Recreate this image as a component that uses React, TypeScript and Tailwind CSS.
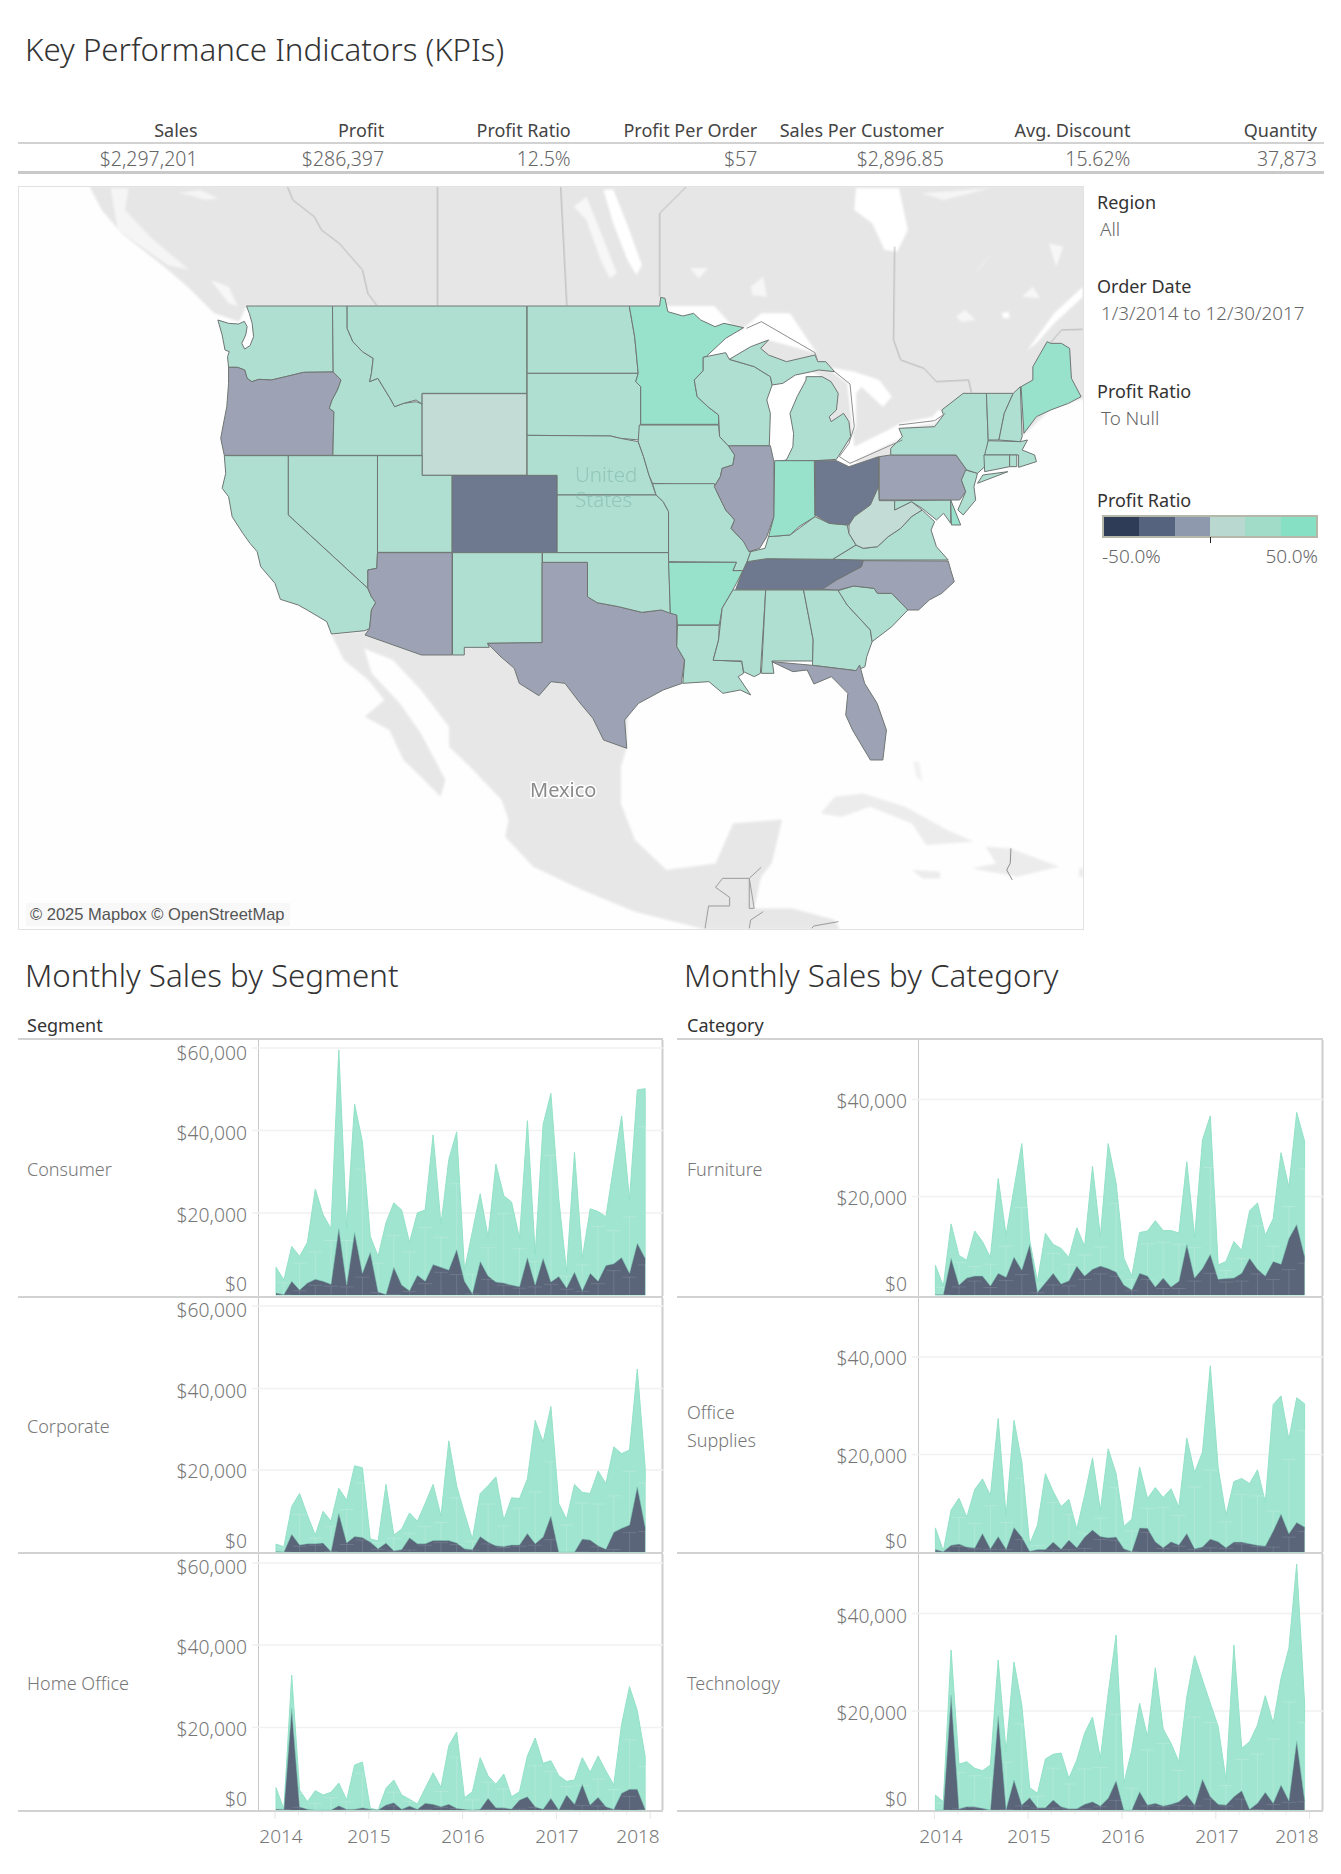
import React from 'react';

const AQUA = '#aedfd1';
const BRIGHT = '#98e1cb';
const PALE = '#c3dcd5';
const GREY = '#9da3b4';
const DARK = '#6e7990';
const EDGE = '#6f7572';

const westStates: [string, string][] = [
  [AQUA, '690,378 931,378 933,576 850,577 800,590 760,600 725,598 705,605 692,595 685,570 665,562 640,562 637,530 642,515 630,510 622,465 610,420 640,430 668,432 684,424 692,440 688,465 677,490 685,507 700,497 710,470 706,430 698,400'],
  [GREY, '640,562 665,562 685,570 692,595 705,605 725,598 760,600 800,590 850,577 933,576 938,582 955,600 945,630 930,660 922,685 935,695 932,826 628,826 618,775 625,735 635,680 640,610'],
  [AQUA, '931,378 972,378 972,445 988,485 1015,515 1045,535 1040,580 1035,605 1058,595 1078,630 1095,660 1105,680 1130,670 1165,665 1182,672 1182,826 932,826 935,695 922,685 930,660 945,630 955,600 933,576'],
  [AQUA, '972,378 1475,378 1475,640 1182,640 1182,672 1165,660 1130,670 1105,680 1095,660 1078,630 1058,595 1035,605 1040,580 1045,535 1015,515 988,485 972,445'],
  [PALE, '1182,641 1475,641 1475,886 1182,886'],
  [AQUA, '807,827 1057,827 1057,1118 1055,1165 1030,1170 1030,1225 807,1005'],
  [AQUA, '1057,827 1182,827 1182,886 1266,886 1266,1117 1057,1117'],
  [DARK, '1266,886 1560,886 1560,1117 1266,1117'],
  [AQUA, '628,827 807,827 807,1005 1030,1225 1040,1250 1052,1268 1040,1290 1035,1345 1022,1352 928,1362 915,1325 860,1290 835,1275 785,1258 770,1210 730,1160 720,1115 700,1090 680,1060 650,1010 640,950 622,925 632,880'],
  [GREY, '1057,1118 1266,1118 1266,1425 1180,1425 1022,1365 1035,1345 1040,1290 1052,1268 1040,1250 1030,1225 1030,1170 1055,1165'],
  [AQUA, '1267,1118 1518,1118 1518,1388 1365,1390 1370,1402 1300,1402 1300,1425 1267,1425'],
  [GREY, '1518,1147 1645,1147 1645,1250 1672,1268 1732,1280 1797,1297 1852,1290 1895,1305 1895,1400 1917,1440 1909,1500 1910,1510 1857,1530 1788,1570 1749,1620 1755,1705 1690,1680 1660,1615 1621,1565 1582,1510 1543,1505 1509,1547 1454,1510 1440,1465 1400,1428 1365,1390 1518,1388'],
];

const eastStates: [string, string][] = [
  [AQUA, '-36,378 250,378 265,470 275,580 -36,580'],
  [AQUA, '-36,580 275,580 268,605 282,620 282,735 277,780 225,775 198,768 -36,766'],
  [AQUA, '-36,766 197,768 225,775 275,785 290,830 305,885 325,945 48,945 48,886 -36,886'],
  [AQUA, '48,945 325,945 345,965 360,995 360,1118 48,1118'],
  [AQUA, '7,1118 360,1118 365,1300 340,1290 285,1297 220,1280 160,1268 133,1250 133,1147 7,1147'],
  [BRIGHT, '250,378 335,378 338,352 350,355 358,395 400,408 430,400 450,420 490,440 515,430 570,443 520,475 465,530 457,532 457,572 432,600 440,650 470,680 500,705 500,733 282,733 282,620 268,605 275,580 265,470'],
  [AQUA, '278,735 500,735 503,770 530,800 545,825 540,855 510,865 505,890 488,920 315,910 305,885 290,830 275,785'],
  [AQUA, '315,911 488,911 495,935 520,990 545,1020 535,1045 570,1085 590,1115 580,1145 570,1172 540,1172 550,1147 360,1145 360,995 345,965 325,945'],
  [BRIGHT, '360,1147 550,1147 540,1172 568,1172 550,1210 540,1230 510,1285 502,1335 385,1335 383,1305 365,1300'],
  [AQUA, '385,1336 502,1336 500,1380 485,1440 565,1445 570,1480 555,1490 590,1545 561,1530 512,1540 473,1505 400,1510 405,1440 383,1400'],
  [AQUA, '540,1230 632,1230 617,1480 600,1490 570,1475 565,1443 485,1441 500,1380 510,1285'],
  [AQUA, '632,1230 738,1230 765,1380 763,1443 650,1443 655,1480 620,1480'],
  [AQUA, '738,1230 835,1230 860,1275 925,1350 930,1385 915,1430 910,1460 885,1472 763,1456 765,1380'],
  [GREY, '649,1445 763,1456 885,1472 895,1455 909,1510 944,1570 970,1650 960,1740 925,1740 875,1650 856,1605 862,1540 816,1490 767,1512 748,1470 708,1475'],
  [AQUA, '835,1232 878,1218 935,1225 945,1240 985,1240 1030,1290 985,1340 930,1385 925,1350 860,1275'],
  [GREY, '905,1142 1143,1143 1150,1170 1160,1205 1125,1240 1090,1260 1060,1290 1030,1290 985,1240 945,1240 935,1225 878,1218 835,1230 790,1228 830,1200 900,1160'],
  [DARK, '635,1136 905,1140 900,1160 830,1200 790,1228 548,1228 568,1172 580,1145'],
  [AQUA, '640,1070 700,1065 770,1010 810,1030 860,1035 865,1060 885,1095 820,1138 635,1136 580,1145 590,1115 630,1105'],
  [GREY, '527,797 645,797 655,845 655,1010 635,1070 615,1105 585,1115 570,1085 535,1045 545,1020 520,990 495,935 488,920 505,890 510,865 540,855 545,825'],
  [AQUA, '457,532 465,530 520,518 530,538 600,560 645,590 650,615 635,660 645,700 642,797 527,797 503,770 500,705 470,680 440,650 432,600 457,572'],
  [AQUA, '530,538 590,500 640,480 618,505 640,525 690,545 770,525 778,545 800,545 825,575 780,570 760,575 715,585 680,610 650,615 645,590 600,560'],
  [AQUA, '745,590 790,590 815,605 835,640 830,690 810,710 815,725 850,700 865,725 870,770 830,838 770,842 660,845 690,840 708,800 710,760 700,700 720,650 745,600'],
  [BRIGHT, '657,842 768,842 770,1010 725,1040 700,1065 640,1070 655,1010'],
  [DARK, '770,842 830,842 865,860 948,830 948,920 925,975 880,1010 865,1035 810,1030 770,1005'],
  [AQUA, '885,1095 905,1105 945,1100 975,1070 1010,1045 1040,1010 1070,990 1105,1025 1095,1050 1110,1100 1143,1140 905,1140 820,1138'],
  [PALE, '950,962 993,962 993,990 1040,965 1070,990 1040,1010 1010,1045 975,1070 945,1100 905,1105 885,1095 865,1060 865,1035 880,1010 925,975 948,920'],
  [AQUA, '993,962 1150,960 1150,1030 1130,1000 1110,1020 1070,985 1040,965 993,990'],
  [BRIGHT, '1150,960 1178,1035 1152,1035'],
  [GREY, '950,830 982,825 1165,825 1195,870 1180,900 1192,935 1175,960 950,960'],
  [AQUA, '1192,870 1225,880 1215,920 1220,960 1185,1005 1170,990 1192,935 1180,900'],
  [AQUA, '982,825 982,805 1015,770 1005,745 1105,740 1130,705 1125,690 1185,640 1250,640 1255,780 1245,860 1225,880 1195,870 1165,825'],
  [AQUA, '1225,910 1310,875 1240,885'],
  [AQUA, '1250,640 1325,640 1300,700 1285,780 1255,780'],
  [AQUA, '1325,640 1345,620 1350,770 1345,785 1285,780 1300,700'],
  [BRIGHT, '1347,620 1380,600 1380,560 1420,485 1430,490 1460,490 1483,505 1488,595 1515,650 1480,670 1430,690 1390,710 1355,760'],
  [AQUA, '1255,782 1345,785 1365,780 1350,810 1385,825 1390,845 1340,862 1340,825 1245,825'],
  [AQUA, '1243,825 1315,825 1315,860 1245,875'],
  [AQUA, '1315,825 1335,825 1335,860 1315,860'],
];

const Map = () => (
  <svg width="1064" height="742" viewBox="19 187 1064 742" className="block">
    <defs>
      <filter id="soft" x="-5%" y="-5%" width="110%" height="110%">
        <feGaussianBlur stdDeviation="1.1" />
      </filter>
    </defs>
    <rect x="0" y="0" width="1341" height="1874" fill="#fefefe" />
    <g filter="url(#soft)">
      <g transform="translate(0 180) scale(0.35714 0.33333)">
        <polygon fill="#e6e6e6" points="250,18 285,90 340,160 460,260 530,325 600,400 670,425 690,378 2000,378 2400,850 2700,800 2860,770 2950,680 3040,655 3040,18" />
        <polygon fill="#f5f5f5" points="310,25 360,25 350,90 420,170 480,225 530,270 470,255 330,150" />
        <polygon fill="#f7f7f7" points="590,300 640,320 665,378 640,370" />
        <polygon fill="#f5f5f5" points="500,40 560,30 610,55 575,60 530,45" />
      </g>
      <g transform="translate(540 180) scale(0.35714 0.33333)" fill="#ffffff">
        <polygon points="178,30 205,28 250,150 285,255 270,285 245,240 205,130" />
        <polygon fill="#f7f7f7" points="95,80 130,50 160,130 215,280 195,295 170,240 130,120" />
        <polygon points="885,25 1005,25 1030,150 1000,215 965,210 930,130 880,90" />
        <polygon fill="#f5f5f5" points="1070,40 1260,25 1130,60" />
        <polygon fill="#f6f6f6" points="590,320 625,290 635,350 595,345" />
        <polygon fill="#f6f6f6" points="1165,410 1190,390 1220,420 1180,425" />
        <polygon points="1292,400 1312,395 1315,415 1298,415" />
        <polygon points="1365,510 1440,400 1520,320 1520,350 1440,430 1390,490" />
        <polygon fill="#f5f5f5" points="1215,285 1270,215 1235,255" />
        <polygon fill="#f7f7f7" points="420,265 470,265 445,295" />
        <polygon fill="#f7f7f7" points="1350,350 1380,320 1400,355" />
        <polygon fill="#f7f7f7" points="1425,190 1465,200 1445,260" />
        <polygon points="465,530 570,445 620,400 700,400 775,520 640,480 530,530" />
        <polygon points="800,560 880,575 950,600 985,650 960,680 900,620 885,640 885,740 860,790 840,830 870,850 1010,775 1010,745 1105,730 1135,700 1115,690 1100,710 1010,730 975,750 880,800 870,700 860,610" />
        <polygon points="640,665 680,610 715,585 760,575 790,590 745,600 720,650 700,700 710,760 708,800 690,840 660,845 642,790" />
      </g>
      <g transform="translate(0 660) scale(0.70153 0.33333)">
        <polygon fill="#e7e7e7" points="472,-78 524,-88 519,-35 530,40 570,130 600,220 635,360 628,410 600,350 575,300 555,210 520,170 548,120 525,60 490,0" />
        <polygon fill="#e7e7e7" points="524,-88 900,-88 893,265 885,320 885,430 905,540 950,630 1020,610 1045,490 1115,478 1100,610 1085,650 1075,745 1130,745 1190,780 1197,808 1005,808 905,755 830,690 760,620 720,530 725,480 715,420 670,320 640,260 640,200 600,90 560,0 519,-35" />
        <polygon fill="#ececec" points="1170,460 1190,410 1230,400 1290,440 1350,510 1388,545 1320,555 1300,490 1240,440 1200,470" />
        <polygon fill="#ececec" points="1405,560 1440,565 1510,620 1450,650 1385,625 1420,610" />
        <polygon fill="#ececec" points="1300,630 1340,635 1340,655 1315,655" />
        <polygon fill="#f1f1f1" points="1302,305 1310,305 1315,365 1306,350" />
        <polygon fill="#ececec" points="1538,625 1545,625 1545,650 1538,650" />
      </g>
    </g>
    <g transform="translate(0 660) scale(0.70153 0.33333)" fill="none" stroke="#9a9a9a" strokeWidth="1">
      <polyline vectorEffect="non-scaling-stroke" points="1005,805 1010,738 1040,738 1040,712 1020,682 1030,655 1068,655 1068,745 1075,745 1068,655 1085,622" />
      <polyline vectorEffect="non-scaling-stroke" points="1068,805 1070,780 1088,755" />
      <polyline vectorEffect="non-scaling-stroke" points="1157,805 1160,798 1195,785" />
      <polyline vectorEffect="non-scaling-stroke" stroke="#8a8a8a" points="1441,565 1440,610 1435,630 1443,660" />
    </g>
    <g fill="none" stroke="#b2b2b2" strokeWidth="1" transform="translate(0 180) scale(0.35714 0.33333)">
      <polyline vectorEffect="non-scaling-stroke" points="805,20 820,60 880,110 900,150 950,190 1015,270 1030,340 1055,376" />
      <polyline vectorEffect="non-scaling-stroke" points="1225,20 1225,376" />
      <polyline vectorEffect="non-scaling-stroke" points="1570,20 1587,376" />
      <polyline vectorEffect="non-scaling-stroke" points="1922,20 1847,100 1847,350" />
      <polyline vectorEffect="non-scaling-stroke" points="2505,200 2502,480 2522,540 2587,565 2622,605 2712,600 2720,638" />
      <polyline vectorEffect="non-scaling-stroke" points="3032,448 2972,450 2940,490" />
    </g>
    <g transform="translate(0 180) scale(0.35714 0.33333)" stroke={EDGE} strokeWidth="1" strokeLinejoin="round">
      {westStates.map((s, i) => (
        <polygon key={i} fill={s[0]} points={s[1]} vectorEffect="non-scaling-stroke" />
      ))}
    </g>
    <g transform="translate(540 180) scale(0.35714 0.33333)" stroke={EDGE} strokeWidth="1" strokeLinejoin="round">
      {eastStates.map((s, i) => (
        <polygon key={i} fill={s[0]} points={s[1]} vectorEffect="non-scaling-stroke" />
      ))}
      <polyline fill="none" stroke="#8b8f8d" vectorEffect="non-scaling-stroke" points="578,445 620,425 770,518 778,545" />
      <polyline fill="none" stroke="#8b8f8d" vectorEffect="non-scaling-stroke" points="825,575 868,612 880,740 865,790 838,830 868,850 1015,780" />
      <polyline fill="none" stroke="#8b8f8d" vectorEffect="non-scaling-stroke" points="1005,735 1105,722 1135,700" />
    </g>
    <text x="575" y="482" fontSize="20.5" fontWeight="300" fill="#7fb5a6" fillOpacity="0.6" fontFamily="'Noto Sans', sans-serif">United</text>
    <text x="575" y="507" fontSize="20.5" fontWeight="300" fill="#7fb5a6" fillOpacity="0.6" fontFamily="'Noto Sans', sans-serif">States</text>
    <text x="530" y="797" fontSize="20" fill="#8a8a8a" stroke="#ffffff" strokeWidth="3" paintOrder="stroke" fontFamily="'Noto Sans', sans-serif">Mexico</text>
  </svg>
);

type Series = { sales: number[]; profit: number[]; base: number; scale: number };
type Row = { label: string[]; top: number; height: number; cls: string; ticks: [string, number, number][]; zero: number; data: Series };

const segRows: Row[] = [
  {
    label: ['Consumer'], top: 1038, height: 258, cls: 'h-[258px]', zero: 1295,
    ticks: [['$60,000', 1048, 1053], ['$40,000', 1130.5, 1133], ['$20,000', 1213, 1215], ['$0', 1295, 1284]],
    data: {
      base: 873, scale: 2.53,
      sales: [803,835,750,775,740,605,670,705,253,705,390,485,725,775,690,640,658,740,665,658,468,695,530,460,810,712,617,727,542,622,638,730,432,770,442,363,630,815,512,780,655,662,675,545,420,632,354,351],
      profit: [868,872,838,860,843,833,838,846,705,848,715,818,765,865,872,803,848,862,823,838,796,803,810,758,838,870,788,825,840,843,848,852,778,848,780,840,826,855,815,862,818,838,798,794,778,818,742,780],
    },
  },
  {
    label: ['Corporate'], top: 1296, height: 256, cls: 'h-[256px]', zero: 1552,
    ticks: [['$60,000', 1306, 1310], ['$40,000', 1388.5, 1391], ['$20,000', 1470, 1471], ['$0', 1552, 1541]],
    data: {
      base: 1523, scale: 2.53,
      sales: [1503,1510,1408,1375,1430,1480,1420,1445,1362,1392,1305,1310,1490,1495,1352,1480,1465,1424,1445,1400,1352,1432,1242,1356,1425,1490,1375,1355,1333,1442,1386,1388,1338,1190,1245,1155,1400,1440,1352,1372,1375,1318,1350,1257,1274,1265,1060,1310],
      profit: [1522,1523,1478,1505,1502,1502,1500,1522,1425,1500,1484,1486,1498,1515,1500,1520,1517,1487,1502,1502,1494,1494,1494,1500,1515,1517,1484,1498,1507,1509,1505,1505,1476,1502,1485,1432,1523,1523,1523,1490,1493,1507,1516,1473,1463,1455,1358,1460],
    },
  },
  {
    label: ['Home Office'], top: 1552, height: 258, cls: 'h-[258px]', zero: 1810,
    ticks: [['$60,000', 1563, 1567], ['$40,000', 1645, 1647], ['$20,000', 1727.5, 1729], ['$0', 1810, 1799]],
    data: {
      base: 810, scale: 3,
      sales: [743,808,405,750,785,752,765,757,729,780,675,666,805,810,745,720,765,778,792,745,698,742,617,576,773,755,653,708,733,702,770,755,648,594,670,662,707,724,720,653,697,648,693,735,553,440,512,650],
      profit: [807,808,505,800,808,810,810,810,797,808,808,803,808,810,795,788,808,798,808,790,793,800,793,805,808,810,808,775,803,803,807,780,770,800,808,775,810,765,793,733,795,772,800,808,760,748,748,808],
    },
  },
];

const catRows: Row[] = [
  {
    label: ['Furniture'], top: 1038, height: 258, cls: 'h-[258px]', zero: 1295,
    ticks: [['$40,000', 1099.5, 1101], ['$20,000', 1196.5, 1198], ['$0', 1295, 1284]],
    data: {
      base: 873, scale: 2.53,
      sales: [798,850,693,773,785,711,738,778,578,722,603,490,735,838,717,745,755,778,703,750,548,725,490,590,780,825,715,711,685,710,710,716,536,727,480,420,797,788,738,760,660,640,722,680,513,600,411,484],
      profit: [872,872,780,848,830,825,825,850,818,828,777,810,745,866,842,818,845,837,800,825,808,800,806,815,848,860,818,825,853,830,853,838,745,830,806,770,833,831,830,818,780,808,825,788,795,730,695,775],
    },
  },
  {
    label: ['Office', 'Supplies'], top: 1296, height: 256, cls: 'h-[256px]', zero: 1552,
    ticks: [['$40,000', 1357, 1358], ['$20,000', 1454.5, 1456], ['$0', 1552, 1541]],
    data: {
      base: 1523, scale: 2.53,
      sales: [1462,1520,1417,1387,1435,1365,1338,1380,1185,1432,1190,1295,1503,1455,1325,1370,1408,1390,1465,1380,1285,1418,1262,1325,1458,1440,1308,1388,1360,1385,1363,1410,1235,1322,1270,1052,1310,1430,1345,1337,1350,1315,1397,1150,1128,1238,1133,1148],
      profit: [1517,1522,1506,1503,1510,1513,1476,1515,1484,1516,1461,1485,1521,1517,1517,1498,1516,1493,1512,1485,1467,1484,1487,1485,1515,1522,1462,1463,1497,1512,1497,1505,1476,1515,1510,1490,1497,1512,1498,1498,1502,1506,1508,1470,1427,1477,1448,1460],
    },
  },
  {
    label: ['Technology'], top: 1552, height: 258, cls: 'h-[258px]', zero: 1810,
    ticks: [['$40,000', 1613.5, 1616], ['$20,000', 1711, 1713], ['$0', 1810, 1799]],
    data: {
      base: 810, scale: 3,
      sales: [765,785,330,673,665,685,692,675,360,635,366,495,743,760,657,643,639,715,660,580,531,655,460,285,730,630,490,590,383,567,610,665,470,347,420,490,560,720,315,625,605,555,467,550,415,325,72,490],
      profit: [810,810,465,806,800,800,805,810,528,808,720,795,773,803,803,780,800,806,806,793,785,798,775,722,810,810,755,795,790,798,793,785,765,795,718,770,793,795,770,752,808,790,757,790,735,782,603,780],
    },
  },
];

const ChartRow = ({ row, left, paneL, paneR, start, labelCls }: { row: Row; left: number; paneL: number; paneR: number; start: number; labelCls: string }) => {
  const svgX = left + 120;
  const step = 7.855;
  const toY = (v: number) => row.zero - (row.data.base - v) / row.data.scale;
  const X = (i: number) => start + i * step;
  const pts = (arr: number[]) => arr.map((v, i) => `${X(i).toFixed(1)},${toY(v).toFixed(1)}`);
  const end = X(47);
  const area = (arr: number[]) => `${start},${row.zero} ${pts(arr).join(' ')} ${end},${row.zero}`;
  const w = paneR + 1 - svgX;
  const top = row.top + 2;
  const h = row.height - 2;
  const tee = (arr: number[], stroke: string, op: number) =>
    arr.map((v, i) => {
      if (i % 2 === 0) return null;
      const y = row.zero - (row.zero - toY(Math.max(v, arr[i - 1]))) * 0.82;
      return (
        <path
          key={i}
          d={`M${X(i).toFixed(1)} ${row.zero}V${y.toFixed(1)}M${(X(i) - 7).toFixed(1)} ${y.toFixed(1)}H${(X(i) + 7).toFixed(1)}`}
          stroke={stroke}
          strokeOpacity={op}
          strokeWidth="1"
          fill="none"
        />
      );
    });
  return (
    <div className={`grid grid-cols-[120px_1fr] border-t-2 border-[#d2d2d2] ${row.cls}`}>
      <div className={`flex flex-col justify-center pt-[2px] text-[18px] leading-[28px] text-[#777777] font-light ${labelCls}`}>
        {row.label.map((l) => (
          <div key={l}>{l}</div>
        ))}
      </div>
      <svg width={w} height={h} viewBox={`${svgX} ${top} ${w} ${h}`} className="block overflow-visible">
        <line x1={paneL + 0.5} x2={paneL + 0.5} y1={top} y2={top + h} stroke="#c8c8c8" />
        <line x1={paneR - 0.5} x2={paneR - 0.5} y1={top} y2={top + h} stroke="#cdcdcd" strokeWidth="2" />
        {row.ticks.map(([t, y, ly]) => (
          <g key={t}>
            {t !== '$0' && <line x1={paneL - 6} x2={paneR} y1={y} y2={y} stroke="#f1f1f1" strokeWidth="1.5" />}
            <text x={paneL - 11} y={ly + 6.5} textAnchor="end" fontSize="19.3" fontWeight="300" fill="#777777" fontFamily="'Noto Sans', sans-serif">
              {t}
            </text>
          </g>
        ))}
        <polygon points={area(row.data.sales)} fill="#a0e5cf" stroke="#93e2c8" strokeWidth="1" />
        {tee(row.data.sales, '#ffffff', 0.18)}
        <polygon points={area(row.data.profit)} fill="#5a657a" />
        <polyline points={pts(row.data.profit).join(' ')} fill="none" stroke="#7fc9b8" strokeOpacity="0.5" strokeWidth="1" />
        {tee(row.data.profit, '#ffffff', 0.12)}
      </svg>
    </div>
  );
};

const Axis = ({ paneL, paneR, start, years }: { paneL: number; paneR: number; start: number; years: number[] }) => {
  const svgX = paneL;
  const w = paneR + 1 - svgX;
  return (
    <div className="flex justify-end border-t-2 border-[#d2d2d2]">
      <svg width={w} height="44" viewBox={`${svgX} 1812 ${w} 44`} className="block">
        {[0, 1, 2, 3, 4].map((y) => (
          <line key={y} x1={start + y * 93.8} x2={start + y * 93.8} y1="1810" y2="1819" stroke="#e6e6e6" />
        ))}
        {Array.from({ length: 16 }).map((_, q) => (
          <line key={q} x1={start + q * 23.45} x2={start + q * 23.45} y1="1810" y2="1815" stroke="#efefef" />
        ))}
        {years.map((x, i) => (
          <text key={i} x={x} y="1843" textAnchor="middle" fontSize="19" fontWeight="300" fill="#777777" fontFamily="'Noto Sans', sans-serif">
            {2014 + i}
          </text>
        ))}
      </svg>
    </div>
  );
};

const Panel = ({ title, header, rows, left, paneL, paneR, start, years, cls, labelCls }: { title: string; header: string; rows: Row[]; left: number; paneL: number; paneR: number; start: number; years: number[]; cls: string; labelCls: string }) => (
  <div className={cls}>
    <div className="h-[82px] pt-[25px] pl-[7px] text-[31.3px] leading-[40px] font-light text-[#333333] whitespace-nowrap">{title}</div>
    <div className={`h-[26px] text-[18px] leading-[26px] text-[#333333] ${labelCls}`}>{header}</div>
    {rows.map((r) => (
      <ChartRow key={r.label[0]} row={r} left={left} paneL={paneL} paneR={paneR} start={start} labelCls={labelCls} />
    ))}
    <Axis paneL={paneL} paneR={paneR} start={start} years={years} />
  </div>
);

const kpis = [
  ['Sales', '$2,297,201'],
  ['Profit', '$286,397'],
  ['Profit Ratio', '12.5%'],
  ['Profit Per Order', '$57'],
  ['Sales Per Customer', '$2,896.85'],
  ['Avg. Discount', '15.62%'],
  ['Quantity', '37,873'],
];

const legend = ['bg-[#2e3c58]', 'bg-[#56637f]', 'bg-[#8f99ad]', 'bg-[#b9d9d0]', 'bg-[#a0dcc8]', 'bg-[#85e0c4]'];

const Filter = ({ label, value, cls, valueCls }: { label: string; value: string; cls: string; valueCls: string }) => (
  <div className={cls}>
    <div className="h-[27px] text-[18px] leading-[27px] text-[#333333]">{label}</div>
    <div className={`h-[27px] text-[18.8px] leading-[27px] font-light text-[#666666] whitespace-nowrap ${valueCls}`}>{value}</div>
  </div>
);

export default function App() {
  return (
    <div className="w-[1341px] h-[1874px] bg-white overflow-hidden font-['Noto_Sans',sans-serif]">
      <div className="h-[119px] pl-[25px] pt-[29px] text-[31.3px] leading-[40px] font-light text-[#333333] whitespace-nowrap">
        Key Performance Indicators (KPIs)
      </div>
      <div className="ml-[18px] w-[1306px]">
        <div className="grid grid-cols-7 h-[25px] border-b-2 border-[#d2d2d2]">
          {kpis.map(([h]) => (
            <div key={h} className="pr-[7px] text-right text-[18px] leading-[22px] text-[#444444] whitespace-nowrap">
              {h}
            </div>
          ))}
        </div>
        <div className="grid grid-cols-7 h-[30px] pt-[2px] border-b-[3px] border-[#c9c9c9]">
          {kpis.map(([h, v]) => (
            <div key={h} className="pr-[7px] text-right text-[19.5px] leading-[25px] font-light text-[#666666] whitespace-nowrap">
              {v}
            </div>
          ))}
        </div>
      </div>
      <div className="flex h-[744px] ml-[18px] mt-[12px]">
        <div className="relative w-[1066px] h-[744px] border border-[#e2e2e2]">
          <Map />
          <div className="absolute left-[7px] top-[716px] h-[23px] w-[264px] bg-[#f8f8f8] pl-[4px] text-[16.5px] leading-[23px] text-[#555555] font-['Liberation_Sans',sans-serif] whitespace-nowrap">
            © 2025 Mapbox © OpenStreetMap
          </div>
        </div>
        <div className="pl-[13px] pt-[3px] w-[240px]">
          <Filter label="Region" value="All" cls="" valueCls="pl-[3px]" />
          <Filter label="Order Date" value="1/3/2014 to 12/30/2017" cls="mt-[30px]" valueCls="pl-[4px]" />
          <Filter label="Profit Ratio" value="To Null" cls="mt-[51px]" valueCls="pl-[4px]" />
          <div className="mt-[55px] h-[27px] text-[18px] leading-[27px] text-[#333333]">Profit Ratio</div>
          <div className="relative ml-[5px] mt-[1px] flex h-[23px] w-[216px] border-2 border-[#b5b7a8]">
            {legend.map((c) => (
              <div key={c} className={`flex-1 ${c}`} />
            ))}
            <div className="absolute left-[106px] top-[20px] h-[6px] w-[1px] bg-[#222222]" />
          </div>
          <div className="ml-[5px] mt-[5px] flex w-[216px] justify-between text-[19px] leading-[27px] font-light text-[#666666]">
            <span>-50.0%</span>
            <span>50.0%</span>
          </div>
        </div>
      </div>
      <div className="flex ml-[18px]">
        <Panel
          title="Monthly Sales by Segment"
          header="Segment"
          rows={segRows}
          left={18}
          paneL={258}
          paneR={663}
          start={276}
          years={[282, 370, 464, 558, 639]}
          cls="w-[645px]"
          labelCls="pl-[9px]"
        />
        <Panel
          title="Monthly Sales by Category"
          header="Category"
          rows={catRows}
          left={677}
          paneL={918}
          paneR={1323}
          start={935.4}
          years={[942, 1030, 1124, 1218, 1298]}
          cls="ml-[14px] w-[646px]"
          labelCls="pl-[10px]"
        />
      </div>
    </div>
  );
}
